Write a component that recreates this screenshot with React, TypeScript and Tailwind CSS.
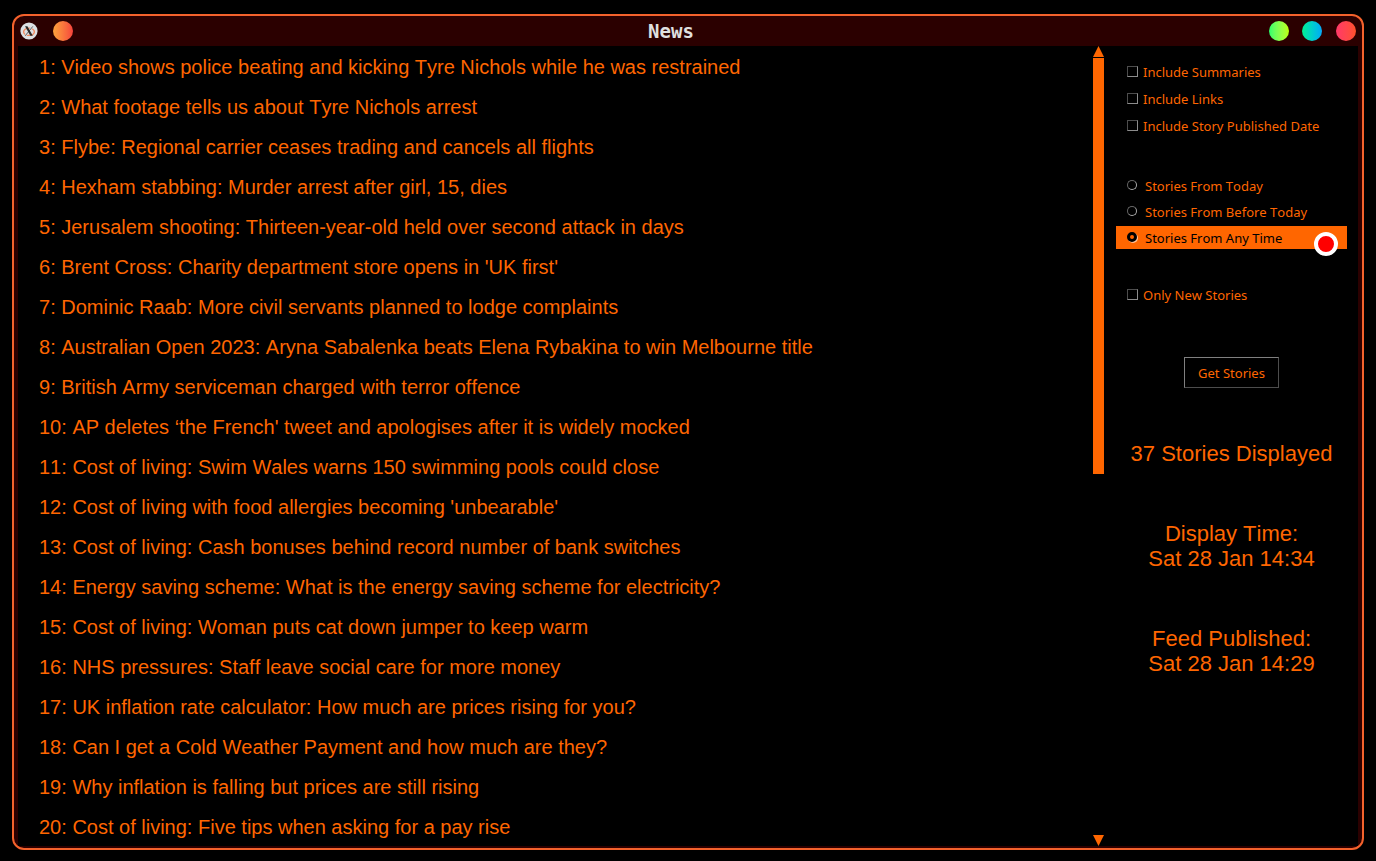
const stories = [
  "Video shows police beating and kicking Tyre Nichols while he was restrained",
  "What footage tells us about Tyre Nichols arrest",
  "Flybe: Regional carrier ceases trading and cancels all flights",
  "Hexham stabbing: Murder arrest after girl, 15, dies",
  "Jerusalem shooting: Thirteen-year-old held over second attack in days",
  "Brent Cross: Charity department store opens in 'UK first'",
  "Dominic Raab: More civil servants planned to lodge complaints",
  "Australian Open 2023: Aryna Sabalenka beats Elena Rybakina to win Melbourne title",
  "British Army serviceman charged with terror offence",
  "AP deletes ‘the French' tweet and apologises after it is widely mocked",
  "Cost of living: Swim Wales warns 150 swimming pools could close",
  "Cost of living with food allergies becoming 'unbearable'",
  "Cost of living: Cash bonuses behind record number of bank switches",
  "Energy saving scheme: What is the energy saving scheme for electricity?",
  "Cost of living: Woman puts cat down jumper to keep warm",
  "NHS pressures: Staff leave social care for more money",
  "UK inflation rate calculator: How much are prices rising for you?",
  "Can I get a Cold Weather Payment and how much are they?",
  "Why inflation is falling but prices are still rising",
  "Cost of living: Five tips when asking for a pay rise",
];

function XLogo() {
  return (
    <svg viewBox="0 0 18 18" className="block size-[18px]" aria-hidden="true">
      <circle cx="9" cy="9" r="8.6" fill="#dde1e4" />
      <ellipse cx="9" cy="9.8" rx="5.4" ry="3.6" fill="none" stroke="#f08a60" strokeWidth="1.4" />
      <path d="M12.4 4.6 L5.6 13.4" stroke="#dde1e4" strokeWidth="2.2" />
      <path d="M12.8 4.4 L5.2 13.8" stroke="#444" strokeWidth="0.8" />
      <path d="M5 4.2 H7.4 L12.8 13.8 H10.4 Z" fill="#2a2a2a" />
    </svg>
  );
}

function Check({ label }: { label: string }) {
  return (
    <label className="flex h-[23px] items-center gap-[5px] pl-[11px]">
      <input
        type="checkbox"
        className="size-[11px] appearance-none border border-t-[#4d4d4d] border-r-[#8c8c8c] border-b-[#8c8c8c] border-l-[#4d4d4d] checked:bg-[#ff6600]"
      />
      <span className="pt-0.5">{label}</span>
    </label>
  );
}

function Radio({ label, checked = false }: { label: string; checked?: boolean }) {
  return (
    <label className="relative flex h-[23px] items-center gap-2 pl-[11px] has-checked:bg-[#ff6600] has-checked:text-black">
      <input
        type="radio"
        name="period"
        defaultChecked={checked}
        className="mb-0.5 size-[10px] appearance-none rounded-full border border-t-[#666] border-r-[#aaa] border-b-[#aaa] border-l-[#666] checked:border-3 checked:border-black checked:bg-[#ff6600] checked:shadow-[1px_1px_0_#ffc299]"
      />
      <span className="pt-0.5">{label}</span>
      {checked && (
        <span className="absolute top-1.5 right-[9px] size-6 rounded-full border-4 border-white bg-[#ff0000]" />
      )}
    </label>
  );
}

export default function App() {
  return (
    <div className="flex h-screen bg-black px-3 pt-[14px] pb-[11px] font-['Noto_Sans',sans-serif] text-[13px] text-[#ff6600] [font-kerning:none]">
      <div className="flex min-w-0 flex-1 flex-col overflow-hidden rounded-xl border-2 border-[#f4622c] bg-[#2b0000] px-1 pb-0.5">
        <header className="flex h-[30px] shrink-0 items-center justify-between px-0.5">
          <div className="flex w-[87px] items-center gap-[15px]">
            <button aria-label="Window menu">
              <XLogo />
            </button>
            <button aria-label="Pin" className="size-5 rounded-full bg-linear-to-r from-[#fca23c] to-[#f4413c]" />
          </div>
          <h1 className="pr-[34px] font-['DejaVu_Sans_Mono',monospace] text-[19px] font-bold text-[#e0e0e0]">News</h1>
          <div className="flex w-[87px] items-center justify-between">
            <button aria-label="Minimise" className="size-5 rounded-full bg-linear-to-r from-[#22ff6c] to-[#baff00]" />
            <button aria-label="Maximise" className="size-5 rounded-full bg-linear-to-r from-[#00f090] to-[#10a8f8]" />
            <button aria-label="Close" className="size-5 rounded-full bg-linear-to-r from-[#ff3868] to-[#ff5028]" />
          </div>
        </header>

        <main className="flex min-h-0 flex-1 overflow-hidden bg-black">
          <ol className="min-w-0 flex-1 overflow-hidden pt-px pl-[21px] font-['Liberation_Sans',sans-serif] text-xl leading-10">
            {stories.map((story, i) => (
              <li key={story} className="truncate">
                {i + 1}: {story}
              </li>
            ))}
          </ol>

          <div className="flex w-[11px] shrink-0 flex-col gap-px">
            <button aria-label="Scroll up">
              <svg viewBox="0 0 11 11" className="block size-[11px]">
                <path d="M5.5 0 L11 11 H0 Z" fill="#ff6600" />
              </svg>
            </button>
            <div className="min-h-0 flex-1">
              <div className="h-[53.6%] bg-[#ff6600]" />
            </div>
            <button aria-label="Scroll down">
              <svg viewBox="0 0 11 11" className="block size-[11px]">
                <path d="M0 0 H11 L5.5 11 Z" fill="#ff6600" />
              </svg>
            </button>
          </div>

          <aside className="flex w-[254px] shrink-0 flex-col pt-[14px] pr-[11px] pl-3">
            <div className="flex flex-col gap-1">
              <Check label="Include Summaries" />
              <Check label="Include Links" />
              <Check label="Include Story Published Date" />
            </div>
            <div className="mt-[37px] flex flex-col gap-[3px]">
              <Radio label="Stories From Today" />
              <Radio label="Stories From Before Today" />
              <Radio label="Stories From Any Time" checked />
            </div>
            <div className="mt-[34px]">
              <Check label="Only New Stories" />
            </div>
            <button className="mt-[51px] h-[31px] self-center border border-t-[#808080] border-r-[#4d4d4d] border-b-[#4d4d4d] border-l-[#808080] px-[13px] pt-0.5">
              Get Stories
            </button>
            <div className="mt-[53px] text-center font-['Liberation_Sans',sans-serif] text-[22px] leading-[25px] whitespace-nowrap">
              <p>37 Stories Displayed</p>
              <p className="mt-[55px]">Display Time:</p>
              <p>Sat 28 Jan 14:34</p>
              <p className="mt-[55px]">Feed Published:</p>
              <p>Sat 28 Jan 14:29</p>
            </div>
          </aside>
        </main>
      </div>
    </div>
  );
}
